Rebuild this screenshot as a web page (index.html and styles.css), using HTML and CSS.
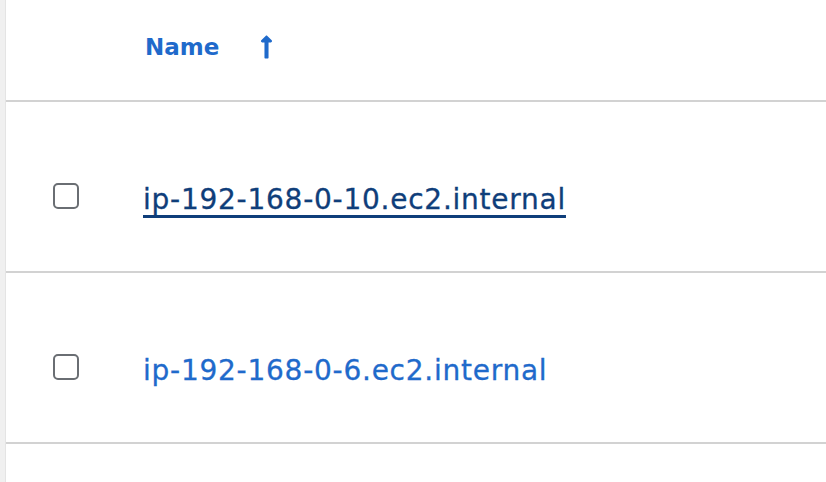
FILE: index.html
```html
<!DOCTYPE html>
<html>
<head>
<meta charset="utf-8">
<link rel="stylesheet" href="styles.css">
</head>
<body>
<div class="page">
  <div class="strip"></div>
  <div class="table">
    <div class="row head">
      <div class="cell check"></div>
      <div class="cell name">
        <span class="sort">Name</span>
        <svg class="arrow" viewBox="0 0 256 512" width="13" height="26"><path fill="currentColor" d="M88 166.059V468c0 6.627 5.373 12 12 12h56c6.627 0 12-5.373 12-12V166.059h46.059c21.382 0 32.09-25.851 16.971-40.971l-86.059-86.059c-9.373-9.373-24.569-9.373-33.941 0l-86.059 86.059c-15.119 15.119-4.411 40.971 16.971 40.971H88z"/></svg>
      </div>
    </div>
    <div class="row body">
      <div class="cell check"><span class="box"></span></div>
      <div class="cell name"><a class="link hover" href="#">ip-192-168-0-10.ec2.internal</a></div>
    </div>
    <div class="row body">
      <div class="cell check"><span class="box"></span></div>
      <div class="cell name"><a class="link" href="#">ip-192-168-0-6.ec2.internal</a></div>
    </div>
  </div>
</div>
</body>
</html>
```
FILE: styles.css
```css
html, body {
  margin: 0;
  padding: 0;
  background: #fff;
  font-family: "DejaVu Sans", "Open Sans", sans-serif;
}
.page {
  display: flex;
  height: 482px;
}
.strip {
  width: 5px;
  background: #f0f0f0;
  border-right: 1px solid #e4e4e4;
}
.table {
  flex: 1;
  display: flex;
  flex-direction: column;
}
.row {
  display: flex;
  border-bottom: 2px solid #d2d2d2;
  box-sizing: border-box;
}
.row.head {
  height: 102px;
  align-items: flex-start;
}
.row.body {
  height: 171px;
}
.cell.check {
  width: 137px;
  padding-left: 47px;
  box-sizing: border-box;
}
.row.head .cell {
  padding-top: 29px;
}
.row.body .cell {
  padding-top: 81px;
}
.row.head .cell.name {
  display: flex;
  align-items: center;
  gap: 41px;
  padding-left: 2px;
  height: 36px;
}
.sort {
  color: #1f6acb;
  font-weight: 700;
  font-size: 23px;
  line-height: 36px;
}
.arrow {
  color: #1f6acb;
  display: block;
}
.box {
  display: block;
  width: 26px;
  height: 26px;
  box-sizing: border-box;
  border: 2px solid #6a6e73;
  border-radius: 5px;
}
.link {
  display: block;
  color: #1f6acb;
  text-decoration: none;
  font-size: 28px;
  letter-spacing: 0.75px;
  line-height: 34px;
  margin-top: 0;
  -webkit-text-stroke: 0.3px currentColor;
}
.link.hover {
  color: #0f3e7a;
  text-decoration: underline;
  text-decoration-thickness: 3px;
  text-underline-offset: 6px;
}
```
